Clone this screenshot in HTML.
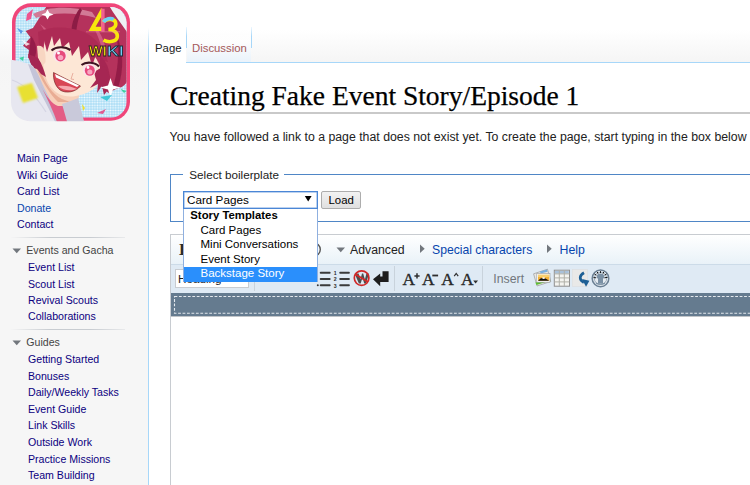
<!DOCTYPE html>
<html><head><meta charset="utf-8">
<style>
html,body{margin:0;padding:0;}
body{width:750px;height:485px;overflow:hidden;position:relative;background:#f6f6f6;font-family:"Liberation Sans",sans-serif;color:#222;}
.a{position:absolute;}
.t{position:absolute;white-space:nowrap;}
</style></head><body>
<div class="a" style="left:0px;top:0px;width:750px;height:90px;background:linear-gradient(#ffffff 0px,#ffffff 30px,#f5f5f5 62px,#f6f6f6 90px)"></div>
<svg class="a" style="left:0;top:0" width="140" height="130" viewBox="0 0 140 130">
<defs>
<pattern id="dots" width="2.6" height="2.6" patternUnits="userSpaceOnUse"><rect width="2.6" height="2.6" fill="#a9dcf5"/><circle cx="1.3" cy="1.3" r="0.95" fill="#f2fbff"/></pattern>
<clipPath id="rr"><rect x="15.5" y="7" width="111" height="110.5" rx="15.5"/></clipPath>
<clipPath id="ro"><rect x="11" y="3.3" width="119" height="118" rx="19"/></clipPath>
<filter id="bl" x="-50%" y="-50%" width="200%" height="200%"><feGaussianBlur stdDeviation="1.3"/></filter>
<filter id="bl2" x="-10%" y="-10%" width="120%" height="120%"><feGaussianBlur stdDeviation="0.5"/></filter>
</defs>
<rect x="12" y="3.3" width="118" height="117.5" rx="19" fill="#f0467a"/>
<rect x="15.5" y="7" width="111" height="110.5" rx="15.5" fill="url(#dots)"/>
<g clip-path="url(#rr)" filter="url(#bl2)">
<!-- white streak top-right -->
<path d="M106 5 L118 5 C122 12 126 18 128 24 L128 34 C120 26 112 16 106 5 Z" fill="#eef0f4"/>
<!-- hair mass -->
<path d="M48 4 L108 4 C114 14 120 22 127 32 L127 82 C124 86 121 88 118 88 L108 93 L104 86 L100 80 L92 70 L70 58 L48 58 L44 72 L38 70 L32 63 L28 57.5 L29 50 L23 45.7 L30.5 37.6 L25.6 31 L33 28 Z" fill="#b5315b"/>
<path d="M33 14 C48 6 72 6 92 12 L96 18 C76 12 52 12 36 18 Z" fill="#d27a96"/>
<path d="M80 8 C74 16 70 26 72 38 L76 38 C76 28 78 18 82 10 Z" fill="#8c1d44"/>
<path d="M31 36 C36 42 38 50 34 60 L29 54 Z" fill="#951f48"/>
<path d="M116 34 C124 50 124 70 118 88 L112 90 C118 72 120 52 116 34 Z" fill="#941f47"/>
<path d="M92 24 C100 30 104 40 106 50 L102 50 C100 40 96 32 92 24 Z" fill="#cf5a80"/>
<path d="M40 24 C50 30 54 40 52 50 L48 48 C50 40 46 32 40 24 Z" fill="#cf5a80"/>
<!-- neck -->
<path d="M28 72 L40 66 L46 56 L56 86 L80 92 L76 108 L50 108 Z" fill="#f7d0ba"/>
<path d="M40 70 C46 84 52 94 62 99 L70 102 L58 102 C50 94 44 84 38 72 Z" fill="#e9ad94"/>
<!-- face -->
<path d="M46 36 C56 30 70 32 84 44 C94 54 102 64 102 78 C98 88 88 94 76 96 C64 98 56 94 50 86 C44 78 40 58 46 36 Z" fill="#fde7d6"/>
<!-- fringe strands over forehead -->
<path d="M38 32 C50 26 68 26 84 32 C96 38 104 48 108 62 L101 60 L97 52 L92 66 L88 52 L81 60 L79 46 L72 56 L69 42 L62 48 L60 38 L54 46 L52 36 L47 52 L44 40 L40 58 Z" fill="#ad2b55"/>
<path d="M100 56 C108 62 112 74 108 92 L102 88 L100 74 Z" fill="#a62852"/>
<path d="M94 72 L104 66 L110 76 L108 90 L104 95 L102 86 L97 93 L98 84 L90 88 L96 80 Z" fill="#a62852"/>
<!-- ear -->
<path d="M37 46 C44 44 46 52 45.5 62 C44 66 40 65 38 58 Z" fill="#f8d6c2"/>
<!-- sideburn -->
<path d="M28 54 L38 58 C42 64 44 70 46 77 L41 74 L37 69 L33 68 L30 62 Z" fill="#a52852"/>
<!-- eyes -->
<ellipse cx="60" cy="55.5" rx="7" ry="6.6" fill="#fbe4ec"/>
<ellipse cx="60.5" cy="56" rx="5.2" ry="5.4" fill="#e64a7c"/>
<ellipse cx="60.5" cy="57.5" rx="2.8" ry="2.6" fill="#f7a6c0"/>
<circle cx="58.5" cy="53" r="1.5" fill="#fff"/>
<path d="M51.5 50.5 C56 46.5 65 46 70.5 50" stroke="#3e1424" stroke-width="2.2" fill="none"/>
<ellipse cx="89.5" cy="70" rx="6.6" ry="6.4" fill="#fbe4ec"/>
<ellipse cx="89.8" cy="70.5" rx="5" ry="5.2" fill="#e64a7c"/>
<ellipse cx="89.8" cy="72" rx="2.6" ry="2.5" fill="#f7a6c0"/>
<circle cx="88" cy="67.5" r="1.4" fill="#fff"/>
<path d="M81.5 65 C86 61.5 95 62 99 66.5" stroke="#3e1424" stroke-width="2.2" fill="none"/>
<!-- nose -->
<path d="M73 73 L71 79 L74 79.5" stroke="#e6a898" stroke-width="0.9" fill="none"/>
<!-- mouth -->
<path d="M53.5 72.5 C62 77 72 82 80.5 86 C76 92 66 94 60 90 C55 86 53 79 53.5 72.5 Z" fill="#d84656" stroke="#6a2020" stroke-width="0.6"/>
<path d="M55 74 L79 85.6 L77 87 L56 77.5 Z" fill="#fff"/>
<path d="M58 86 C63 91 71 91 77 89 C71 86 64 85 58 86 Z" fill="#f5a8ae"/>
<!-- confetti / stars -->
<path d="M27 14 L33 9 L31 19 L26 21 Z" fill="#ee5590"/>
<path d="M17 28 L23 31 L21 34 Z" fill="#5a9ae8"/>
<path d="M47.5 9.5 L49.5 13 L53.5 14.5 L49.5 16 L47.5 19.5 L45.5 16 L41.5 14.5 L45.5 13 Z" fill="#ffffff"/>
<path d="M110.5 78 L113 85.5 L121 87.6 L113 89.6 L110.5 97 L108 89.6 L100 87.6 L108 85.5 Z" fill="#ffffff"/>
<path d="M100 97 L112 95 L107 101 Z" fill="#40c8d8"/>
<path d="M120.5 89 L126.5 91 L124 93 Z" fill="#3fd0a0"/>
<path d="M82 104 L85 108 L83 111 Z" fill="#f0e030"/>
<path d="M19 58 L24 56.5 L23 61 Z" fill="#40d0a0"/>
<path d="M97 113 L106 109 L103 114 Z" fill="#e05a90"/>
<path d="M22 40 L30 44 L26 46 Z" fill="#ffffff" opacity="0.8"/>
</g>
<g clip-path="url(#ro)" filter="url(#bl2)">
<!-- jacket -->
<path d="M5 59 C16 60 26 62 33 66 C38 76 44 88 50 100 C54 108 58 116 62 125 L5 125 Z" fill="#e7e7f0"/>
<path d="M28 64 C34 66 36 70 38 74 C44 88 50 100 56 110 L62 124 L56 124 C50 110 42 96 34 80 Z" fill="#c4c4d8"/>
<path d="M12 80 C24 84 36 96 46 112" stroke="#d6d6e4" stroke-width="1.3" fill="none"/>
<path d="M41 86 C46 96 52 104 58 106 L66 106 L74 125 L58 125 C54 112 48 100 41 86 Z" fill="#e35d85"/>
<path d="M62 104 C68 102 74 100 78 98 L85 125 L68 125 Z" fill="#c9c9da"/>
<path d="M17 87 L32 83 L38 98 L23 103 Z" fill="#e8e030" filter="url(#bl)"/>
</g>
<!-- A3 -->
<g filter="url(#bl2)">
<path fill-rule="evenodd" d="M88.6 31 L101 8.4 L102.2 8.4 L102.2 31 Z M95.6 26.8 L101.2 26.8 L101.2 17 Z" fill="#f8e80c"/>
<rect x="101.2" y="8.8" width="3.4" height="22.8" fill="#f06090"/>
<path d="M103.5 22 C105.5 18.5 115.5 18 115.8 23.5 C116 27 112.5 29.2 108.5 29.5 C114 29.8 117.8 32.5 117.3 36.8 C116.8 41.5 109 43.2 103.5 40" stroke="#f8e80c" stroke-width="3.6" fill="none"/>
<path d="M103.5 22 C105.5 18.5 111 17.5 113.5 19.5" stroke="#6ccff5" stroke-width="3.6" fill="none"/>
<path d="M86 31.8 L120 31.8" stroke="#f090a8" stroke-width="0.5"/>
</g>
<g font-family="Liberation Sans" font-weight="bold" font-size="14.6" stroke-width="0.8" filter="url(#bl2)">
<text x="89" y="56" fill="#f8e80c" stroke="#2a2020" textLength="17.8" lengthAdjust="spacingAndGlyphs">WI</text>
<text x="107" y="56" fill="#70cdf4" stroke="#202a35" textLength="16.6" lengthAdjust="spacingAndGlyphs">KI</text>
</g>
</svg>

<div class="t" style="left:17.00px;top:152.06px;font-size:10.6px;line-height:12.19px;color:#0b0080;font-weight:normal;font-family:'Liberation Sans',sans-serif;">Main Page</div>
<div class="t" style="left:17.00px;top:168.63px;font-size:10.6px;line-height:12.19px;color:#0b0080;font-weight:normal;font-family:'Liberation Sans',sans-serif;">Wiki Guide</div>
<div class="t" style="left:17.00px;top:185.20px;font-size:10.6px;line-height:12.19px;color:#0b0080;font-weight:normal;font-family:'Liberation Sans',sans-serif;">Card List</div>
<div class="t" style="left:17.00px;top:201.77px;font-size:10.6px;line-height:12.19px;color:#0645ad;font-weight:normal;font-family:'Liberation Sans',sans-serif;">Donate</div>
<div class="t" style="left:17.00px;top:218.34px;font-size:10.6px;line-height:12.19px;color:#0b0080;font-weight:normal;font-family:'Liberation Sans',sans-serif;">Contact</div>
<div class="a" style="left:10px;top:237px;width:115px;height:1px;background:linear-gradient(90deg,rgba(200,204,209,0),#c8ccd1 35%,#c8ccd1 70%,rgba(200,204,209,0.3))"></div>
<svg class="a" style="left:12px;top:248px" width="10" height="6"><path d="M0.5 0.5 L9 0.5 L4.75 5.2 Z" fill="#72777d"/></svg>
<div class="t" style="left:26.30px;top:244.01px;font-size:10.6px;line-height:12.19px;color:#444;font-weight:normal;font-family:'Liberation Sans',sans-serif;">Events and Gacha</div>
<div class="t" style="left:28.00px;top:261.11px;font-size:10.6px;line-height:12.19px;color:#0b0080;font-weight:normal;font-family:'Liberation Sans',sans-serif;">Event List</div>
<div class="t" style="left:28.00px;top:277.56px;font-size:10.6px;line-height:12.19px;color:#0b0080;font-weight:normal;font-family:'Liberation Sans',sans-serif;">Scout List</div>
<div class="t" style="left:28.00px;top:294.01px;font-size:10.6px;line-height:12.19px;color:#0b0080;font-weight:normal;font-family:'Liberation Sans',sans-serif;">Revival Scouts</div>
<div class="t" style="left:28.00px;top:310.46px;font-size:10.6px;line-height:12.19px;color:#0b0080;font-weight:normal;font-family:'Liberation Sans',sans-serif;">Collaborations</div>
<div class="a" style="left:10px;top:329px;width:115px;height:1px;background:linear-gradient(90deg,rgba(200,204,209,0),#c8ccd1 35%,#c8ccd1 70%,rgba(200,204,209,0.3))"></div>
<svg class="a" style="left:12px;top:340px" width="10" height="6"><path d="M0.5 0.5 L9 0.5 L4.75 5.2 Z" fill="#72777d"/></svg>
<div class="t" style="left:26.30px;top:336.41px;font-size:10.6px;line-height:12.19px;color:#444;font-weight:normal;font-family:'Liberation Sans',sans-serif;">Guides</div>
<div class="t" style="left:28.00px;top:352.91px;font-size:10.6px;line-height:12.19px;color:#0b0080;font-weight:normal;font-family:'Liberation Sans',sans-serif;">Getting Started</div>
<div class="t" style="left:28.00px;top:369.55px;font-size:10.6px;line-height:12.19px;color:#0b0080;font-weight:normal;font-family:'Liberation Sans',sans-serif;">Bonuses</div>
<div class="t" style="left:28.00px;top:386.19px;font-size:10.6px;line-height:12.19px;color:#0b0080;font-weight:normal;font-family:'Liberation Sans',sans-serif;">Daily/Weekly Tasks</div>
<div class="t" style="left:28.00px;top:402.83px;font-size:10.6px;line-height:12.19px;color:#0b0080;font-weight:normal;font-family:'Liberation Sans',sans-serif;">Event Guide</div>
<div class="t" style="left:28.00px;top:419.47px;font-size:10.6px;line-height:12.19px;color:#0b0080;font-weight:normal;font-family:'Liberation Sans',sans-serif;">Link Skills</div>
<div class="t" style="left:28.00px;top:436.11px;font-size:10.6px;line-height:12.19px;color:#0b0080;font-weight:normal;font-family:'Liberation Sans',sans-serif;">Outside Work</div>
<div class="t" style="left:28.00px;top:452.75px;font-size:10.6px;line-height:12.19px;color:#0b0080;font-weight:normal;font-family:'Liberation Sans',sans-serif;">Practice Missions</div>
<div class="t" style="left:28.00px;top:469.39px;font-size:10.6px;line-height:12.19px;color:#0b0080;font-weight:normal;font-family:'Liberation Sans',sans-serif;">Team Building</div>
<div class="a" style="left:148px;top:28px;width:1px;height:35px;background:linear-gradient(rgba(167,215,249,0),#a7d7f9 60%)"></div>
<div class="a" style="left:149px;top:28px;width:37px;height:35px;background:#fff"></div>
<div class="a" style="left:186px;top:27px;width:1px;height:21px;background:linear-gradient(rgba(167,215,249,0.2) 0%,#a7d7f9 45%,#a7d7f9 100%)"></div>
<div class="a" style="left:187px;top:28px;width:64px;height:34px;background:linear-gradient(rgba(255,255,255,0) 0%,rgba(255,255,255,0.6) 40%,#eaf3fb 100%)"></div>
<div class="a" style="left:251px;top:27px;width:1px;height:21px;background:linear-gradient(rgba(167,215,249,0.2) 0%,#a7d7f9 45%,#a7d7f9 100%)"></div>
<div class="a" style="left:148px;top:62px;width:602px;height:430px;background:#fff;border-left:1px solid #a7d7f9;border-top:1px solid #a7d7f9;box-sizing:border-box"></div>
<div class="a" style="left:149px;top:62px;width:37px;height:2px;background:#fff"></div>
<div class="t" style="left:155.00px;top:42.43px;font-size:11.35px;line-height:13.05px;color:#222;font-weight:normal;font-family:'Liberation Sans',sans-serif;">Page</div>
<div class="t" style="left:192.00px;top:42.43px;font-size:11.35px;line-height:13.05px;color:#a55858;font-weight:normal;font-family:'Liberation Sans',sans-serif;">Discussion</div>
<div class="t" style="left:170.00px;top:79.80px;font-size:27.5px;line-height:31.62px;color:#000;font-weight:normal;font-family:'Liberation Serif',serif;-webkit-text-stroke:0.25px #000">Creating Fake Event Story/Episode 1</div>
<div class="a" style="left:170px;top:112px;width:580px;height:2px;background:#c9c9c9"></div>
<div class="t" style="left:169.60px;top:130.37px;font-size:12.3px;line-height:14.14px;color:#222;font-weight:normal;font-family:'Liberation Sans',sans-serif;">You have followed a link to a page that does not exist yet. To create the page, start typing in the box below</div>
<div class="a" style="left:170px;top:174px;width:590px;height:48px;border:1px solid #4f86c6;border-right:0;box-sizing:border-box"></div>
<div class="a" style="left:183px;top:168px;width:101px;height:12px;background:#fff"></div>
<div class="t" style="left:189.30px;top:167.61px;font-size:11.7px;line-height:13.45px;color:#222;font-weight:normal;font-family:'Liberation Sans',sans-serif;">Select boilerplate</div>
<div class="a" style="left:170px;top:234px;width:590px;height:260px;border:1px solid #c8ccd1;border-right:0;background:#fff;box-sizing:border-box"></div>
<div class="a" style="left:171px;top:235px;width:590px;height:29px;background:linear-gradient(#ffffff,#e9f2f8)"></div>
<div class="a" style="left:171px;top:264px;width:590px;height:29px;background:#dfeaf4;border-top:1px solid #ccdbe8;box-sizing:border-box"></div>
<div class="a" style="left:171px;top:293px;width:590px;height:23px;background:#657b8f"></div>
<div class="a" style="left:171px;top:316px;width:590px;height:1px;background:#c0c4c8"></div>
<svg class="a" style="left:170px;top:290px" width="580" height="30"><rect x="4.5" y="6.5" width="600" height="16.8" fill="none" stroke="#e4e9ee" stroke-width="1.1" stroke-dasharray="2.8 1.65"/></svg>
<div class="t" style="left:179.00px;top:240.35px;font-size:17px;line-height:19.55px;color:#2a2a2a;font-weight:bold;font-family:'Liberation Serif',serif;">B</div>
<svg class="a" style="left:300px;top:240px" width="25" height="20"><circle cx="13.5" cy="9.5" r="6.8" fill="none" stroke="#555" stroke-width="1.4"/></svg>
<svg class="a" style="left:336px;top:247px" width="10" height="6"><path d="M0.5 0.5 L9 0.5 L4.75 5.2 Z" fill="#72777d"/></svg>
<div class="t" style="left:350.00px;top:242.77px;font-size:12.3px;line-height:14.14px;color:#222;font-weight:normal;font-family:'Liberation Sans',sans-serif;">Advanced</div>
<svg class="a" style="left:419px;top:244px" width="7" height="10"><path d="M1 0.5 L5.7 4.75 L1 9 Z" fill="#72777d"/></svg>
<div class="t" style="left:432.00px;top:242.86px;font-size:12.2px;line-height:14.03px;color:#0645ad;font-weight:normal;font-family:'Liberation Sans',sans-serif;">Special characters</div>
<svg class="a" style="left:546px;top:244px" width="7" height="10"><path d="M1 0.5 L5.7 4.75 L1 9 Z" fill="#72777d"/></svg>
<div class="t" style="left:559.50px;top:242.77px;font-size:12.3px;line-height:14.14px;color:#0645ad;font-weight:normal;font-family:'Liberation Sans',sans-serif;">Help</div>
<div class="a" style="left:175px;top:269px;width:74px;height:19px;background:#fff;border:1px solid #c8ccd1;box-sizing:border-box"></div>
<div class="t" style="left:178.00px;top:272.41px;font-size:11.7px;line-height:13.45px;color:#222;font-weight:normal;font-family:'Liberation Sans',sans-serif;">Heading</div>
<div class="a" style="left:254px;top:266px;width:1px;height:25px;background:#c9d3dc"></div>
<div class="a" style="left:394px;top:266px;width:1px;height:25px;background:#c9d3dc"></div>
<div class="a" style="left:482px;top:266px;width:1px;height:25px;background:#c9d3dc"></div>
<svg class="a" style="left:300px;top:264px" width="320" height="29" viewBox="300 264 320 29">
<!-- bullet list -->
<g fill="#3a3a3a"><rect x="319.8" y="271.7" width="10.8" height="2.1" rx="0.8"/><rect x="319.8" y="278.0" width="10.8" height="2.1" rx="0.8"/><rect x="319.8" y="284.2" width="10.8" height="2.1" rx="0.8"/>
<circle cx="317.8" cy="285.2" r="1"/>
<rect x="339.3" y="271.7" width="10.5" height="2.1" rx="0.8"/><rect x="339.3" y="278.0" width="10.5" height="2.1" rx="0.8"/><rect x="339.3" y="284.2" width="10.5" height="2.1" rx="0.8"/></g>
<g font-family="Liberation Sans" font-weight="bold" font-size="5.2" fill="#2a2a2a">
<text x="333.8" y="275">1</text><text x="333.8" y="281.3">2</text><text x="333.8" y="287.5">3</text></g>
<!-- nowiki -->
<path d="M354.6 273.4 L358.6 273.4 L360.4 279.5 L362 273.4 L363.2 273.4 L364.9 279.5 L366.4 273.4 L369 273.4 L366 283.4 L364.2 283.4 L362.5 277.6 L360.7 283.4 L358.9 283.4 Z" fill="#4e4e4e"/>
<circle cx="361.6" cy="278.1" r="7.3" fill="none" stroke="#d02828" stroke-width="1.7"/>
<path d="M355.8 274.4 L367.6 281.8" stroke="#d02828" stroke-width="1.8"/>
<!-- enter arrow -->
<path d="M382.5 271.2 L388.6 271.2 L388.6 282 L380.2 282 L380.2 286.2 L373 279.2 L380.2 273.6 L380.2 276.5 L382.5 276.5 Z" fill="#1e1e1e"/>
<!-- font size icons -->
<g font-family="Liberation Serif" fill="#2a2a2a" stroke="#2a2a2a" stroke-width="0.35">
<text x="402.6" y="284.6" font-size="17.4">A</text>
<text x="422" y="284.6" font-size="17.4">A</text>
<text x="441.2" y="284.6" font-size="17.4">A</text>
<text x="461" y="284.6" font-size="17.4">A</text>
</g>
<path d="M414.4 275.9 L419.6 275.9 M417 273.3 L417 278.5" stroke="#2e2e2e" stroke-width="1.5"/>
<rect x="432.3" y="274.6" width="5.8" height="1.8" fill="#2e2e2e"/>
<path d="M454.2 276.2 L456.2 273.5 L458.2 276.2" stroke="#2e2e2e" stroke-width="1.2" fill="none"/>
<path d="M473.2 280.6 L478 280.6 L475.6 283.6 Z" fill="#2e2e2e"/>
<!-- gallery -->
<g>
<path d="M533.6 273.8 L547.5 269.2 L550.8 281.5 L537 286 Z" fill="#e8e8e4" stroke="#8c8c8c" stroke-width="0.6"/>
<path d="M535.5 282.5 L549.5 278 L550.3 280.5 L536.5 285 Z" fill="#5cc030"/>
<path d="M540 271.5 L547 269.6 L547.6 271.8 L540.6 273.6 Z" fill="#7ab0e0"/>
<rect x="536.8" y="273.6" width="13.2" height="8.6" fill="#fafafa" stroke="#9a9a9a" stroke-width="0.6"/>
<rect x="538" y="274.8" width="11.2" height="6" fill="#f3b23a"/>
<rect x="538" y="274.8" width="11.2" height="2.2" fill="#f8d070"/>
<path d="M538 280.8 L540.5 278.6 L542.5 278 L545 278.2 L547.2 279.5 L549.2 280.8 Z" fill="#111"/>
<ellipse cx="543.6" cy="278.1" rx="1.6" ry="0.8" fill="#fff"/>
</g>
<!-- table -->
<g>
<rect x="554.3" y="270.2" width="15.2" height="16" fill="#f4f4f0" stroke="#8e8e8e" stroke-width="1"/>
<rect x="555" y="270.9" width="13.8" height="2.8" fill="#a9c1da"/>
<path d="M554.5 273.9 H569.3 M554.5 277.9 H569.3 M554.5 281.9 H569.3 M559.3 270.5 V286 M564.3 270.5 V286" stroke="#b0b0a8" stroke-width="1"/>
</g>
<!-- redirect -->
<rect x="572.2" y="269.6" width="15" height="16.8" fill="#e9e9e8" stroke="#dcdcdc" stroke-width="0.5"/>
<path d="M584 272.8 C579.2 275.5 578.8 279.8 583.8 282.6" stroke="#1d5f95" stroke-width="2.7" fill="none"/><path d="M582 279 L589.4 280.8 L586 286.8 Z" fill="#1d5f95"/>
<!-- signature -->
<circle cx="600.5" cy="278.4" r="8.3" fill="#e6ecf1" stroke="#6b8094" stroke-width="1.5"/>
<circle cx="600.5" cy="278.4" r="6.2" fill="none" stroke="#95a6b6" stroke-width="0.9"/>
<path d="M597 275.5 C597.5 272.8 603.5 272.8 604 275.5 L604.5 278 L603 278.5 L603 283.5 L598 283.5 L598 278.5 L596.5 278 Z" fill="#7a90a4"/>
<path d="M596 283 C598 284.5 603 284.5 605 283" stroke="#7a90a4" stroke-width="1.2" fill="none"/>
<g stroke="#111" stroke-width="1"><path d="M593.5 277.6 L596 277.8 M594.4 274 L596.4 275.2 M597.2 271.8 L598 273.6 M600.5 271.2 L600.5 273 M603.8 271.8 L603 273.6 M606.6 274 L604.6 275.2 M604.5 277.8 L607.5 277.4"/></g>
</svg>

<div class="t" style="left:493.30px;top:271.67px;font-size:12.3px;line-height:14.14px;color:#72777d;font-weight:normal;font-family:'Liberation Sans',sans-serif;">Insert</div>
<div class="a" style="left:183px;top:191px;width:135px;height:18px;background:#fff;border:1px solid #4a86d6;box-shadow:inset 0 0 0 0.5px #7aa6e0;box-sizing:border-box"></div>
<div class="t" style="left:187.00px;top:193.41px;font-size:11.7px;line-height:13.45px;color:#000;font-weight:normal;font-family:'Liberation Sans',sans-serif;">Card Pages</div>
<svg class="a" style="left:304px;top:195px" width="9" height="8"><path d="M0.8 1 L7.6 1 L4.2 6.5 Z" fill="#000"/></svg>
<div class="a" style="left:321px;top:191px;width:40px;height:18px;background:linear-gradient(#f2f2f2,#e0e0e0);border:1px solid #adadad;border-radius:2px;box-sizing:border-box"></div>
<div class="t" style="left:328.50px;top:193.98px;font-size:11.4px;line-height:13.11px;color:#000;font-weight:normal;font-family:'Liberation Sans',sans-serif;">Load</div>
<div class="a" style="left:183px;top:209px;width:135px;height:73px;background:#fff;border:1px solid #8fb0e0;border-top:0;box-sizing:border-box"></div>
<div class="t" style="left:190.30px;top:209.33px;font-size:11.35px;line-height:13.05px;color:#000;font-weight:bold;font-family:'Liberation Sans',sans-serif;">Story Templates</div>
<div class="t" style="left:200.50px;top:224.09px;font-size:11.5px;line-height:13.22px;color:#000;font-weight:normal;font-family:'Liberation Sans',sans-serif;">Card Pages</div>
<div class="t" style="left:200.50px;top:238.29px;font-size:11.5px;line-height:13.22px;color:#000;font-weight:normal;font-family:'Liberation Sans',sans-serif;">Mini Conversations</div>
<div class="t" style="left:200.50px;top:252.59px;font-size:11.5px;line-height:13.22px;color:#000;font-weight:normal;font-family:'Liberation Sans',sans-serif;">Event Story</div>
<div class="a" style="left:184px;top:267px;width:133px;height:15px;background:#2a8ffc"></div>
<div class="t" style="left:200.50px;top:267.09px;font-size:11.5px;line-height:13.22px;color:#fff;font-weight:normal;font-family:'Liberation Sans',sans-serif;">Backstage Story</div>
</body></html>
